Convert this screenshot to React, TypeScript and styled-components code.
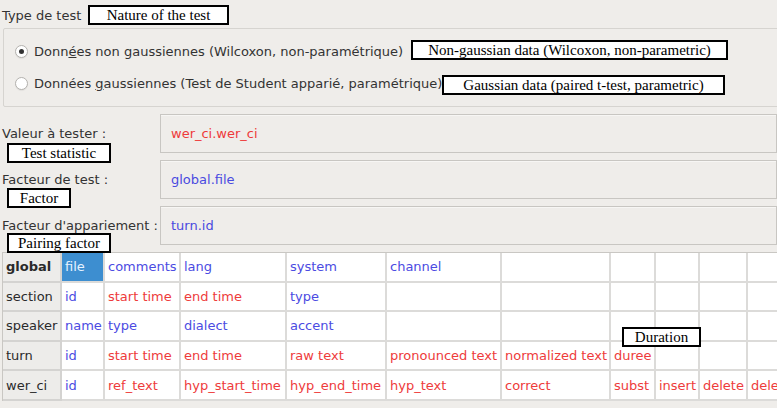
import React from "react";
import styled, { createGlobalStyle, css } from "styled-components";

const Global = createGlobalStyle`
  html, body { margin: 0; padding: 0; background: #efedea; }
  body { font-family: "DejaVu Sans", "Noto Sans", sans-serif; font-size: 13px; color: #333; }
`;

const Page = styled.div`
  position: relative;
  width: 777px;
  height: 408px;
  overflow: hidden;
  background: #efedea;
  display: flex;
  flex-direction: column;
`;

const Heading = styled.div`
  height: 24px;
  padding: 4px 0 0 2px;
  line-height: 24px;
  box-sizing: border-box;
  height: 28px;
`;

const Group = styled.div`
  margin: 0 -20px 0 3px;
  border: 1px solid #d6d4d0;
  border-radius: 2px;
  padding: 10px 0 11px 11px;
  display: flex;
  flex-direction: column;
  gap: 8px;
  height: 79px;
  box-sizing: border-box;
`;

const RadioRow = styled.label`
  display: flex;
  align-items: center;
  gap: 6px;
  height: 24px;
`;

const RadioCircle = styled.span<{ $checked?: boolean }>`
  width: 13px;
  height: 13px;
  border-radius: 50%;
  border: 1px solid #b4b2ae;
  background: #fff;
  box-sizing: border-box;
  display: flex;
  align-items: center;
  justify-content: center;
  box-shadow: 0 1px 1px rgba(0,0,0,0.06);
  ${(p) =>
    p.$checked &&
    css`
      &::after {
        content: "";
        width: 5px;
        height: 5px;
        border-radius: 50%;
        background: #333;
      }
    `}
`;

const RadioText = styled.span`
  color: #333;
`;

const Form = styled.div`
  display: flex;
  flex-direction: column;
  gap: 7px;
  margin-top: 7px;
  padding-left: 2px;
`;

const FormRow = styled.div`
  display: flex;
  align-items: center;
  height: 39px;
`;

const FieldLabel = styled.div`
  width: 158px;
  flex: none;
  color: #333;
`;

const Field = styled.div<{ $tone: "red" | "blue" }>`
  flex: 1;
  height: 39px;
  box-sizing: border-box;
  border: 1px solid #c8c6c2;
  box-shadow: inset 0 1px 0 #f7f6f4;
  display: flex;
  align-items: center;
  padding-left: 10px;
  color: ${(p) => (p.$tone === "red" ? "#ee3a3a" : "#4a4ae0")};
`;

const TableWrap = styled.div`
  margin: 7px 0 0 2px;
  overflow: hidden;
`;

const Grid = styled.table`
  border-collapse: separate;
  border-spacing: 0;
  table-layout: fixed;
  width: 795px;
  border-top: 1px solid #c9c7c3;
  border-left: 1px solid #c9c7c3;
  background: #fff;
`;

const HeadCell = styled.th<{ $bold?: boolean }>`
  box-sizing: border-box;
  height: 29.6px;
  padding: 0 0 0 3px;
  text-align: left;
  font-weight: ${(p) => (p.$bold ? "bold" : "normal")};
  background: #edecea;
  color: #2a2a2a;
  border-right: 2px solid #d4d3d1;
  border-bottom: 2px solid #d4d3d1;
  white-space: nowrap;
`;

const Cell = styled.td<{ $tone?: "red" | "blue"; $selected?: boolean }>`
  box-sizing: border-box;
  height: 29.6px;
  padding: 0 0 0 3px;
  white-space: nowrap;
  overflow: hidden;
  border-right: 2px solid #dcdbd9;
  border-bottom: 2px solid #dcdbd9;
  color: ${(p) => (p.$tone === "red" ? "#ee3b3b" : "#4b4be2")};
  ${(p) =>
    p.$selected &&
    css`
      background: #3d8ed0;
      color: #e6f2ff;
    `}
`;

const Note = styled.div<{ $x: number; $y: number; $w: number }>`
  position: absolute;
  left: ${(p) => p.$x}px;
  top: ${(p) => p.$y}px;
  width: ${(p) => p.$w}px;
  height: 20px;
  box-sizing: border-box;
  border: 2px solid #000;
  background: #fff;
  font-family: "Liberation Serif", "Times New Roman", serif;
  font-size: 15px;
  line-height: 16px;
  color: #000;
  text-align: center;
  white-space: nowrap;
`;

type C = { t: string; tone?: "red" | "blue"; sel?: boolean };

const widths = [59, 43, 76, 106, 100, 115, 109, 45, 44, 48, 50];

const rows: { head: string; bold?: boolean; cells: C[] }[] = [
  {
    head: "global",
    bold: true,
    cells: [
      { t: "file", sel: true },
      { t: "comments" },
      { t: "lang" },
      { t: "system" },
      { t: "channel" },
    ],
  },
  {
    head: "section",
    cells: [
      { t: "id" },
      { t: "start time", tone: "red" },
      { t: "end time", tone: "red" },
      { t: "type" },
    ],
  },
  {
    head: "speaker",
    cells: [{ t: "name" }, { t: "type" }, { t: "dialect" }, { t: "accent" }],
  },
  {
    head: "turn",
    cells: [
      { t: "id" },
      { t: "start time", tone: "red" },
      { t: "end time", tone: "red" },
      { t: "raw text", tone: "red" },
      { t: "pronounced text", tone: "red" },
      { t: "normalized text", tone: "red" },
      { t: "duree", tone: "red" },
    ],
  },
  {
    head: "wer_ci",
    cells: [
      { t: "id" },
      { t: "ref_text", tone: "red" },
      { t: "hyp_start_time", tone: "red" },
      { t: "hyp_end_time", tone: "red" },
      { t: "hyp_text", tone: "red" },
      { t: "correct", tone: "red" },
      { t: "subst", tone: "red" },
      { t: "insert", tone: "red" },
      { t: "delete", tone: "red" },
      { t: "delete", tone: "red" },
    ],
  },
];

export default function App() {
  return (
    <Page>
      <Global />
      <Heading>Type de test</Heading>
      <Group>
        <RadioRow>
          <RadioCircle $checked />
          <RadioText>
            Donn<u>é</u>es non gaussiennes (Wilcoxon, non-paramétrique)
          </RadioText>
        </RadioRow>
        <RadioRow>
          <RadioCircle />
          <RadioText>
            Données <u>g</u>aussiennes (Test de Student apparié, paramétrique)
          </RadioText>
        </RadioRow>
      </Group>
      <Form>
        <FormRow>
          <FieldLabel>Valeur à tester :</FieldLabel>
          <Field $tone="red">wer_ci.wer_ci</Field>
        </FormRow>
        <FormRow>
          <FieldLabel>Facteur de test :</FieldLabel>
          <Field $tone="blue">global.file</Field>
        </FormRow>
        <FormRow>
          <FieldLabel>Facteur d'appariement :</FieldLabel>
          <Field $tone="blue">turn.id</Field>
        </FormRow>
      </Form>
      <TableWrap>
        <Grid>
          <colgroup>
            {widths.map((w, i) => (
              <col key={i} style={{ width: w }} />
            ))}
          </colgroup>
          <tbody>
            {rows.map((r) => (
              <tr key={r.head}>
                <HeadCell $bold={r.bold}>{r.head}</HeadCell>
                {widths.slice(1).map((_, i) => {
                  const c = r.cells[i];
                  return (
                    <Cell key={i} $tone={c?.tone ?? "blue"} $selected={c?.sel}>
                      {c?.t ?? ""}
                    </Cell>
                  );
                })}
              </tr>
            ))}
          </tbody>
        </Grid>
      </TableWrap>

      <Note $x={88} $y={5} $w={141}>Nature of the test</Note>
      <Note $x={411} $y={40} $w={317}>Non-gaussian data (Wilcoxon, non-parametric)</Note>
      <Note $x={442} $y={75} $w={283}>Gaussian data (paired t-test, parametric)</Note>
      <Note $x={7} $y={143} $w={104}>Test statistic</Note>
      <Note $x={7} $y={188} $w={64}>Factor</Note>
      <Note $x={7} $y={233} $w={104}>Pairing factor</Note>
      <Note $x={622} $y={327} $w={79}>Duration</Note>
    </Page>
  );
}
